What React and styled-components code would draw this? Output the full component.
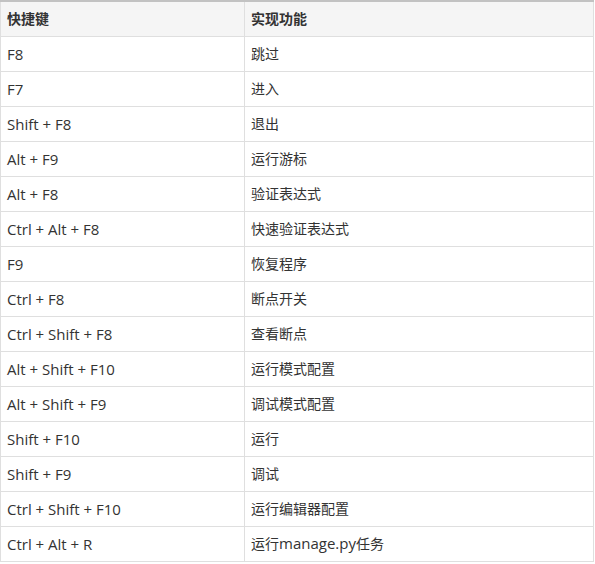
import React from "react";
import styled, { createGlobalStyle } from "styled-components";

const rows = [
  ["F8", "跳过"],
  ["F7", "进入"],
  ["Shift + F8", "退出"],
  ["Alt + F9", "运行游标"],
  ["Alt + F8", "验证表达式"],
  ["Ctrl + Alt + F8", "快速验证表达式"],
  ["F9", "恢复程序"],
  ["Ctrl + F8", "断点开关"],
  ["Ctrl + Shift + F8", "查看断点"],
  ["Alt + Shift + F10", "运行模式配置"],
  ["Alt + Shift + F9", "调试模式配置"],
  ["Shift + F10", "运行"],
  ["Shift + F9", "调试"],
  ["Ctrl + Shift + F10", "运行编辑器配置"],
  ["Ctrl + Alt + R", <>运行<Latin>manage.py</Latin>任务</>],
];

function Latin({ children }) {
  return <LatinText>{children}</LatinText>;
}

const Global = createGlobalStyle`
  body {
    margin: 0;
    background: #fff;
    font-family: "Open Sans", "Noto Sans CJK SC", sans-serif;
  }
`;

const Table = styled.table`
  width: 594px;
  border-collapse: collapse;
  border-top: 2px solid #c2c2c2;
  color: #333;
  table-layout: fixed;
`;

const Cell = styled.td`
  height: 35px;
  padding: 0 6px;
  border: 1px solid #dfdfdf;
  border-top: none;
  box-sizing: border-box;
  text-align: left;
  vertical-align: middle;
  white-space: nowrap;
  font-size: ${(p) => (p.$key ? "15px" : "14px")};
  font-weight: ${(p) => (p.$head ? 700 : 400)};
  background: ${(p) => (p.$head ? "#f5f5f5" : "#fff")};
  line-height: 20px;
`;

const LatinText = styled.span`
  font-size: 15px;
`;

export default function App() {
  return (
    <>
      <Global />
      <Table>
        <colgroup>
          <col style={{ width: 244 }} />
          <col />
        </colgroup>
        <thead>
          <tr>
            <Cell as="th" $head>
              快捷键
            </Cell>
            <Cell as="th" $head>
              实现功能
            </Cell>
          </tr>
        </thead>
        <tbody>
          {rows.map(([k, v]) => (
            <tr key={k}>
              <Cell $key>{k}</Cell>
              <Cell>{v}</Cell>
            </tr>
          ))}
        </tbody>
      </Table>
    </>
  );
}
